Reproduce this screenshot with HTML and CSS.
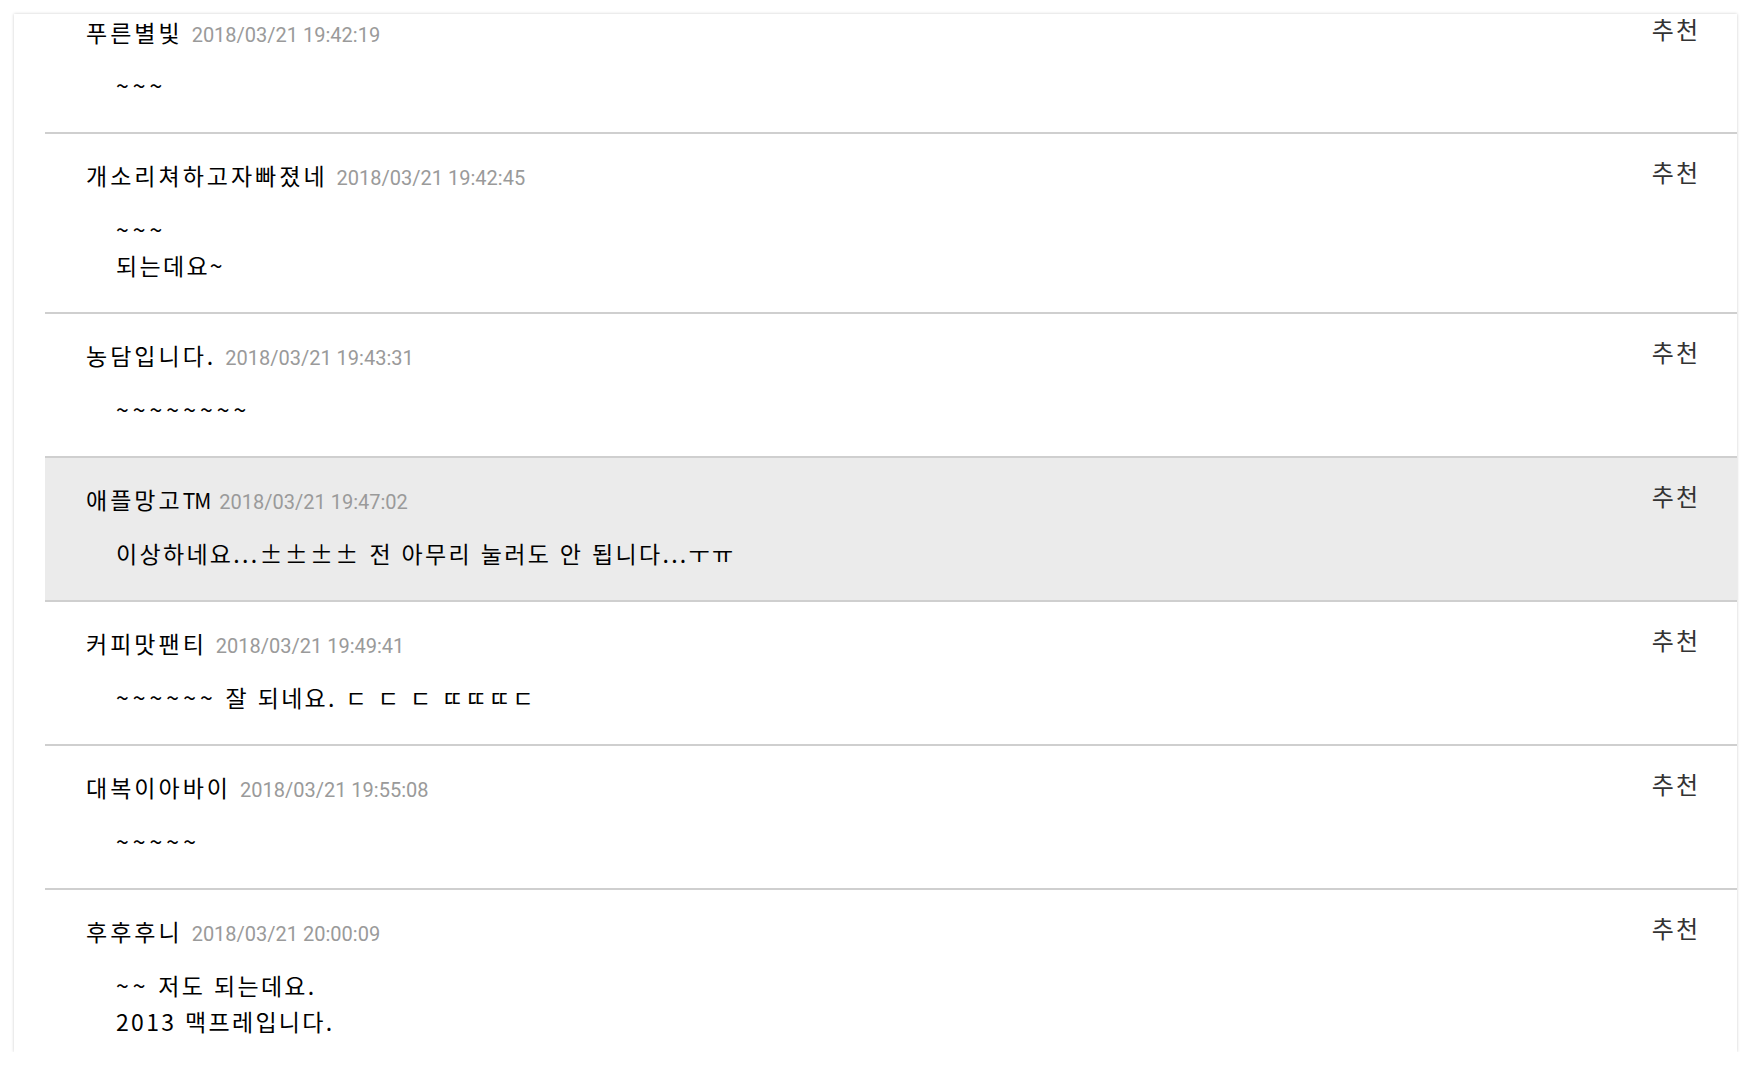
FILE: index.html
```html
<!DOCTYPE html>
<html lang="ko">
<head>
<meta charset="utf-8">
<title>댓글</title>
<link rel="stylesheet" href="styles.css">
</head>
<body>
<div class="card">
  <ul class="comments">
    <li class="comment">
      <div class="head"><span class="name">푸른별빛</span><span class="time">2018/03/21 19:42:19</span><span class="rec">추천</span></div>
      <div class="body"><p><span class="tl">~~~</span></p></div>
    </li>
    <li class="comment">
      <div class="head"><span class="name">개소리쳐하고자빠졌네</span><span class="time">2018/03/21 19:42:45</span><span class="rec">추천</span></div>
      <div class="body"><p><span class="tl">~~~</span></p><p>되는데요~</p></div>
    </li>
    <li class="comment">
      <div class="head"><span class="name">농담입니다.</span><span class="time">2018/03/21 19:43:31</span><span class="rec">추천</span></div>
      <div class="body"><p><span class="tl">~~~~~~~~</span></p></div>
    </li>
    <li class="comment active">
      <div class="head"><span class="name">애플망고<span class="tm">TM</span></span><span class="time">2018/03/21 19:47:02</span><span class="rec">추천</span></div>
      <div class="body"><p>이상하네요...<span class="fw">±±±±</span> 전 아무리 눌러도 안 됩니다...ㅜㅠ</p></div>
    </li>
    <li class="comment">
      <div class="head"><span class="name">커피맛팬티</span><span class="time">2018/03/21 19:49:41</span><span class="rec">추천</span></div>
      <div class="body"><p><span class="tl">~~~~~~</span> 잘 되네요. ㄷ ㄷ ㄷ ㄸㄸㄸㄷ</p></div>
    </li>
    <li class="comment">
      <div class="head"><span class="name">대복이아바이</span><span class="time">2018/03/21 19:55:08</span><span class="rec">추천</span></div>
      <div class="body"><p><span class="tl">~~~~~</span></p></div>
    </li>
    <li class="comment">
      <div class="head"><span class="name">후후후니</span><span class="time">2018/03/21 20:00:09</span><span class="rec">추천</span></div>
      <div class="body"><p><span class="tl">~~</span> 저도 되는데요.</p><p>2013 맥프레입니다.</p></div>
    </li>
  </ul>
</div>
</body>
</html>
```

FILE: styles.css
```css
html, body {
  margin: 0;
  padding: 0;
  background: #ffffff;
}

body {
  font-family: "Noto Sans CJK KR", "Noto Sans", sans-serif;
  color: #000;
}

.card {
  margin: 14px 0 0 14px;
  width: 1723px;
  background: #fff;
  box-shadow: 0 0 3px rgba(0, 0, 0, 0.2);
}

.comments {
  list-style: none;
  margin: 0 0 0 31px;
  padding: 0;
}

.comment {
  padding: 23px 37px 29px 41px;
  border-bottom: 2px solid #cfcfcf;
}

.comment:first-child {
  padding-top: 0;
}

.comment:first-child .body {
  margin-top: 17px;
}

.comment:last-child {
  padding-bottom: 13px;
  border-bottom: none;
}

.comment.active {
  background: #ebebeb;
}

.head {
  display: flex;
  align-items: baseline;
  height: 36px;
  line-height: 36px;
}

.name {
  font-size: 23px;
  letter-spacing: 3px;
  color: #000;
}

.tm {
  letter-spacing: -1px;
  font-size: 21px;
}

.time {
  margin-left: 9px;
  font-family: Roboto, "Liberation Sans", sans-serif;
  font-size: 20px;
  color: #9a9a9a;
}

.rec {
  margin-left: auto;
  margin-top: 3px;
  align-self: flex-start;
  line-height: 24px;
  font-size: 24px;
  letter-spacing: 2px;
  color: #333;
}

.body {
  margin-top: 18px;
  padding-left: 30px;
}

.body p {
  margin: 0;
  font-size: 23px;
  line-height: 36px;
  letter-spacing: 2.3px;
}

.tl {
  letter-spacing: 4px;
}

.fw {
  font-feature-settings: "fwid";
}
```
